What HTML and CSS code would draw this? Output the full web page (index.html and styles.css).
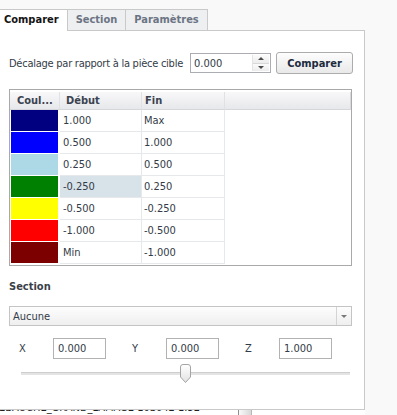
FILE: index.html
```html
<!DOCTYPE html>
<html lang="fr">
<head>
    <meta charset="UTF-8">
    <meta name="viewport" content="width=device-width, initial-scale=1.0">
    <title>Comparer</title>
    <link rel="stylesheet" href="styles.css">
</head>
<body>
    <div class="tabs">
        <div class="tab active">Comparer</div>
        <div class="tab">Section</div>
        <div class="tab">Paramètres</div>
    </div>

    <div class="panel">
        <div class="offset-row">
            <span class="offset-label">Décalage par rapport à la pièce cible</span>
            <div class="spin">
                <span class="spin-value">0.000</span>
                <span class="spin-buttons">
                    <span class="spin-up"></span>
                    <span class="spin-down"></span>
                </span>
            </div>
            <button class="btn">Comparer</button>
        </div>

        <div class="grid">
            <table>
                <thead>
                    <tr>
                        <th class="c-color">Coul...</th>
                        <th class="c-start">Début</th>
                        <th class="c-end">Fin</th>
                        <th class="c-rest"></th>
                    </tr>
                </thead>
                <tbody>
                    <tr><td class="c-color"><div class="swatch navy"></div></td><td class="c-start">1.000</td><td class="c-end">Max</td><td></td></tr>
                    <tr><td class="c-color"><div class="swatch blue"></div></td><td class="c-start">0.500</td><td class="c-end">1.000</td><td></td></tr>
                    <tr><td class="c-color"><div class="swatch lightblue"></div></td><td class="c-start">0.250</td><td class="c-end">0.500</td><td></td></tr>
                    <tr><td class="c-color"><div class="swatch green"></div></td><td class="c-start selected">-0.250</td><td class="c-end">0.250</td><td></td></tr>
                    <tr><td class="c-color"><div class="swatch yellow"></div></td><td class="c-start">-0.500</td><td class="c-end">-0.250</td><td></td></tr>
                    <tr><td class="c-color"><div class="swatch red"></div></td><td class="c-start">-1.000</td><td class="c-end">-0.500</td><td></td></tr>
                    <tr><td class="c-color"><div class="swatch darkred"></div></td><td class="c-start">Min</td><td class="c-end">-1.000</td><td></td></tr>
                </tbody>
            </table>
        </div>

        <h2 class="section-title">Section</h2>

        <div class="select">
            <span class="select-value">Aucune</span>
            <span class="select-arrow"></span>
        </div>

        <div class="coords">
            <div class="coord"><span class="coord-label">X</span><span class="field">0.000</span></div>
            <div class="coord"><span class="coord-label">Y</span><span class="field">0.000</span></div>
            <div class="coord"><span class="coord-label">Z</span><span class="field">1.000</span></div>
        </div>

        <div class="slider">
            <div class="track"></div>
            <svg class="thumb" width="11" height="19" viewBox="0 0 11 19">
                <defs>
                    <linearGradient id="thumbFill" x1="0" y1="0" x2="0" y2="1">
                        <stop offset="0" stop-color="#ffffff"/>
                        <stop offset="1" stop-color="#e2e2e2"/>
                    </linearGradient>
                </defs>
                <path d="M0.5 3 Q0.5 0.5 3 0.5 H8 Q10.5 0.5 10.5 3 V13 L5.5 18.5 L0.5 13 Z" fill="url(#thumbFill)" stroke="#a4a4a4"/>
            </svg>
        </div>
    </div>

    <div class="list">
        <span class="list-text">EBAUCHE_GRAND_LAMAGE 10S042 1.52</span>
        <span class="list-scroll"></span>
    </div>
</body>
</html>
```

FILE: styles.css
```css
body {
    margin: 0;
    width: 397px;
    height: 415px;
    overflow: hidden;
    background-color: #f9f9f9;
    font-family: "DejaVu Sans Condensed", "DejaVu Sans", sans-serif;
    font-size: 11px;
    color: #333b48;
}

/* tabs */
.tabs {
    display: flex;
    padding-top: 9px;
    height: 21px;
}
.tab {
    height: 20px;
    line-height: 20px;
    padding: 0 8px;
    border-top: 1px solid #c9c9c9;
    border-right: 1px solid #c9c9c9;
    background-color: #eeeff1;
    color: #6b7484;
    font-weight: bold;
}
.tab.active {
    margin-left: -4px;
    height: 21px;
    background-color: #fff;
    color: #141414;
    position: relative;
    z-index: 1;
}

/* main panel */
.panel {
    box-sizing: border-box;
    width: 365px;
    height: 380px;
    padding: 21px 11px 0 9px;
    background-color: #fff;
    border-top: 1px solid #c9c9c9;
    border-right: 1px solid #c9c9c9;
    border-bottom: 1px solid #c9c9c9;
}

.offset-row {
    display: flex;
    align-items: center;
    height: 22px;
}
.offset-label {
    white-space: nowrap;
    letter-spacing: -0.25px;
}
.spin {
    box-sizing: border-box;
    flex-shrink: 0;
    width: 81px;
    height: 20px;
    margin-left: auto;
    border: 1px solid #abadb3;
    display: flex;
    align-items: center;
    padding-left: 3px;
}
.spin-value {
    flex: 1;
}
.spin-buttons {
    width: 16px;
    height: 16px;
    margin-right: 1px;
    display: flex;
    flex-direction: column;
    border-left: 1px solid #e4e4e4;
}
.spin-up, .spin-down {
    flex: 1;
    display: flex;
    align-items: center;
    justify-content: center;
    background: linear-gradient(#fbfbfb, #ececec);
}
.spin-up {
    border-bottom: 1px solid #d8d8d8;
}
.spin-up::after {
    content: "";
    border-left: 3px solid transparent;
    border-right: 3px solid transparent;
    border-bottom: 3px solid #4a4a4a;
}
.spin-down::after {
    content: "";
    border-left: 3px solid transparent;
    border-right: 3px solid transparent;
    border-top: 3px solid #4a4a4a;
}
.btn {
    box-sizing: border-box;
    flex-shrink: 0;
    width: 77px;
    height: 22px;
    margin-left: 5px;
    padding: 0;
    border: 1px solid #acacac;
    border-radius: 3px;
    background: linear-gradient(#fdfdfd, #e9e9e9);
    font-family: inherit;
    font-size: 11px;
    font-weight: bold;
    color: #1d2b3e;
}

/* colour table */
.grid {
    box-sizing: border-box;
    width: 343px;
    height: 177px;
    margin-top: 15px;
    padding: 2px 0 1px 0;
    border: 1px solid #a9a9a9;
}
.grid table {
    width: 341px;
    border-collapse: separate;
    border-spacing: 0;
    table-layout: fixed;
}
.grid th {
    height: 17px;
    padding: 0;
    text-align: left;
    font-weight: bold;
    color: #3b4350;
    background: linear-gradient(#f8f8f9, #e7e8eb);
    border-bottom: 1px solid #d6d7da;
    border-right: 1px solid #e0e1e4;
    white-space: nowrap;
    overflow: hidden;
}
.grid td {
    height: 21px;
    padding: 0;
    border-bottom: 1px solid #e6e8eb;
    white-space: nowrap;
}
.grid th.c-color { width: 50px; padding-left: 7px; box-sizing: border-box; }
.grid th.c-start { width: 82px; padding-left: 6px; box-sizing: border-box; }
.grid th.c-end { width: 83px; padding-left: 3px; box-sizing: border-box; }
.grid th.c-rest { border-right: 1px solid #d8d9dc; }
.grid td.c-color {
    padding: 0 1px;
    border-bottom-color: #fff;
    border-right: 1px solid #fff;
}
.grid td.c-start {
    padding-left: 3px;
    border-right: 1px solid #e6e8eb;
}
.grid td.c-end {
    padding-left: 2px;
    border-right: 1px solid #e6e8eb;
}
.grid tbody tr td:last-child {
    border-bottom: none;
}
.grid td.selected {
    background-color: #d8e2e9;
}
.swatch {
    height: 21px;
}
.navy { background-color: #000080; }
.blue { background-color: #0000ff; }
.lightblue { background-color: #add8e6; }
.green { background-color: #008000; }
.yellow { background-color: #ffff00; }
.red { background-color: #ff0000; }
.darkred { background-color: #7d0000; }

/* section */
.section-title {
    margin: 14px 0 0 0;
    font-size: 11px;
    line-height: 13px;
    font-weight: bold;
    color: #3a3f48;
}
.select {
    box-sizing: border-box;
    width: 343px;
    height: 20px;
    margin-top: 13px;
    display: flex;
    align-items: center;
    border: 1px solid #c4c4c4;
    background: linear-gradient(#fdfdfd, #efefef);
}
.select-value {
    flex: 1;
    padding-left: 3px;
}
.select-arrow {
    width: 14px;
    height: 18px;
    border-left: 1px solid #d4d4d4;
    display: flex;
    align-items: center;
    justify-content: center;
}
.select-arrow::after {
    content: "";
    border-left: 3px solid transparent;
    border-right: 3px solid transparent;
    border-top: 3px solid #7a7a7a;
}

.coords {
    display: flex;
    gap: 26px;
    margin-top: 12px;
    padding-left: 10px;
}
.coord {
    display: flex;
    align-items: center;
}
.coord-label {
    width: 34px;
}
.field {
    box-sizing: border-box;
    width: 53px;
    height: 21px;
    line-height: 19px;
    padding-left: 4px;
    border: 1px solid #b2b2b2;
}

.slider {
    position: relative;
    height: 19px;
    margin-top: 5px;
    display: flex;
    align-items: center;
}
.track {
    box-sizing: border-box;
    height: 3px;
    margin: 0 3px 0 12px;
    flex: 1;
    background-color: #e4e4e4;
    border-top: 1px solid #cdcdcd;
}
.thumb {
    position: absolute;
    left: 171px;
    top: 0;
}

/* list behind the panel */
.list {
    position: relative;
    width: 365px;
    height: 6px;
    overflow: hidden;
    background-color: #fff;
}
.list-text {
    display: block;
    margin-top: -9px;
    margin-left: -1px;
    line-height: 13px;
    color: #1e1e1e;
}
.list-scroll {
    position: absolute;
    left: 238px;
    top: 0;
    width: 12px;
    height: 6px;
    border-left: 1px solid #8f8f8f;
    border-right: 1px solid #b8b8b8;
    background: linear-gradient(90deg, #fafafa, #d8d8d8);
}
```
